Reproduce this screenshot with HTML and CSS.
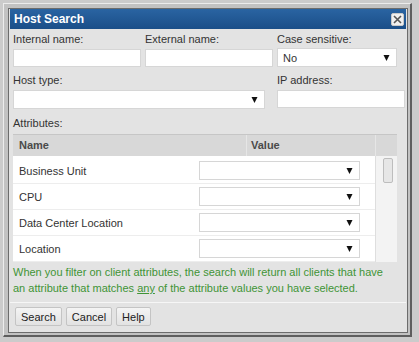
FILE: index.html
```html
<!DOCTYPE html>
<html>
<head>
<meta charset="utf-8">
<link rel="stylesheet" href="styles.css">
</head>
<body>
<div class="window">
  <div class="panel">
    <div class="titlebar">
      <span class="title">Host Search</span>
      <span class="close"><svg width="9" height="9" viewBox="0 0 9 9"><path d="M1 1L8 8M8 1L1 8" stroke="#555" stroke-width="1.6" fill="none"/></svg></span>
    </div>
    <div class="content">
      <div class="form-grid">
        <div class="field">
          <div class="label">Internal name:</div>
          <div class="input"></div>
        </div>
        <div class="field">
          <div class="label">External name:</div>
          <div class="input"></div>
        </div>
        <div class="field">
          <div class="label">Case sensitive:</div>
          <div class="select case"><span class="sel-text">No</span><svg class="arrow" width="7" height="6" viewBox="0 0 7 6"><polygon points="0.5,0 6.5,0 3.5,6" fill="#111"/></svg></div>
        </div>
        <div class="field span2">
          <div class="label">Host type:</div>
          <div class="select host"><span class="sel-text"></span><svg class="arrow" width="7" height="6" viewBox="0 0 7 6"><polygon points="0.5,0 6.5,0 3.5,6" fill="#111"/></svg></div>
        </div>
        <div class="field">
          <div class="label">IP address:</div>
          <div class="input"></div>
        </div>
      </div>
      <div class="attr-label">Attributes:</div>
      <div class="table">
        <div class="thead">
          <div class="th th-name">Name</div>
          <div class="th th-value">Value</div>
          <div class="th th-sb"></div>
        </div>
        <div class="tbody">
          <div class="rows">
            <div class="row"><div class="td-name">Business Unit</div><div class="td-value"><div class="select cell"><span class="sel-text"></span><svg class="arrow" width="7" height="6" viewBox="0 0 7 6"><polygon points="0.5,0 6.5,0 3.5,6" fill="#111"/></svg></div></div></div>
            <div class="row"><div class="td-name">CPU</div><div class="td-value"><div class="select cell"><span class="sel-text"></span><svg class="arrow" width="7" height="6" viewBox="0 0 7 6"><polygon points="0.5,0 6.5,0 3.5,6" fill="#111"/></svg></div></div></div>
            <div class="row"><div class="td-name">Data Center Location</div><div class="td-value"><div class="select cell"><span class="sel-text"></span><svg class="arrow" width="7" height="6" viewBox="0 0 7 6"><polygon points="0.5,0 6.5,0 3.5,6" fill="#111"/></svg></div></div></div>
            <div class="row"><div class="td-name">Location</div><div class="td-value"><div class="select cell"><span class="sel-text"></span><svg class="arrow" width="7" height="6" viewBox="0 0 7 6"><polygon points="0.5,0 6.5,0 3.5,6" fill="#111"/></svg></div></div></div>
          </div>
          <div class="scrollbar"><div class="thumb"></div></div>
        </div>
      </div>
      <p class="note">When you filter on client attributes, the search will return all clients that have an attribute that matches <u>any</u> of the attribute values you have selected.</p>
    </div>
    <div class="footer">
      <button class="btn">Search</button>
      <button class="btn">Cancel</button>
      <button class="btn">Help</button>
    </div>
  </div>
</div>
</body>
</html>
```
FILE: styles.css
```css
* { box-sizing: border-box; }
html, body { margin: 0; padding: 0; }
body {
  background: #cbcbcb;
  font-family: "Liberation Sans", Arial, sans-serif;
  font-size: 11px;
  color: #333;
  padding: 3px 0 0 3px;
  width: 419px;
  height: 342px;
  overflow: hidden;
}
.window {
  width: 409px;
  background: #c2c2c2;
  border-top: 1px solid #ececec;
  border-left: 1px solid #ececec;
  border-right: 2px solid #5e5e5e;
  border-bottom: 2px solid #5e5e5e;
  padding: 4px 2px 2px 4px;
}
.panel {
  width: 400px;
  border: 1px solid #6c6c6c;
  background: #e3e3e3;
  padding: 0 1px;
}
.titlebar {
  height: 20px;
  background: linear-gradient(#2a64a2, #1a4e88);
  display: flex;
  align-items: center;
  justify-content: space-between;
  padding: 0 2px 0 4px;
}
.title {
  color: #fff;
  font-weight: bold;
  font-size: 12px;
}
.close {
  width: 13px;
  height: 13px;
  background: #f0f0f0;
  border: 1px solid #c9c9c9;
  border-radius: 2px;
  display: flex;
  align-items: center;
  justify-content: center;
}
.content {
  padding: 4px 1px 0 3px;
}
.form-grid {
  display: grid;
  grid-template-columns: 128px 128px 128px;
  column-gap: 4px;
  row-gap: 7px;
}
.span2 { grid-column: span 2; }
.label {
  line-height: 13px;
  margin-bottom: 3px;
  color: #333;
}
.input {
  height: 18px;
  background: #fff;
  border: 1px solid #d6d6d6;
}
.select {
  height: 18px;
  background: #fff;
  border: 1px solid #d6d6d6;
  display: flex;
  align-items: center;
  justify-content: space-between;
  padding: 0 6px 0 5px;
}
.select.case { width: 120px; height: 19px; margin-top: -1px; }
.select.host { width: 252px; height: 19px; }
.sel-text { color: #333; }
.arrow { display: block; }
.attr-label {
  line-height: 13px;
  margin-top: 8px;
}
.table {
  width: 384px;
  margin-top: 4px;
}
.thead {
  display: flex;
  height: 22px;
  border-top: 1px solid #c6c6c6;
  background: #d8d8d8;
}
.th {
  font-weight: bold;
  color: #4a4a4a;
  line-height: 21px;
  padding-left: 5px;
}
.th-name { width: 233px; padding-left: 6px; }
.th-value { width: 129px; border-left: 1px solid #e6e6e6; padding-left: 4px; }
.th-sb { width: 22px; border-left: 1px solid #e6e6e6; }
.tbody {
  display: flex;
  height: 106px;
  overflow: hidden;
}
.rows {
  width: 362px;
  background: #fff;
  padding-top: 2px;
}
.row {
  display: flex;
  height: 26px;
  align-items: center;
  border-bottom: 1px solid #ededed;
}
.td-name {
  width: 184px;
  padding-left: 6px;
  color: #333;
}
.td-value {
  padding-left: 2px;
}
.select.cell {
  width: 161px;
  height: 19px;
}
.scrollbar {
  width: 22px;
  background: #f3f3f3;
  border-left: 1px solid #dedede;
  padding: 2px 0 0 7px;
}
.thumb {
  width: 10px;
  height: 25px;
  background: #e6e6e6;
  border: 1px solid #bdbdbd;
  border-radius: 2px;
}
.note {
  width: 378px;
  margin: 2px 0 6px 0;
  line-height: 16px;
  color: #3f9436;
}
.note u { text-decoration: underline; }
.footer {
  border-top: 1px solid #f6f6f6;
  padding: 4px 0 6px 5px;
  display: flex;
  gap: 4px;
}
.btn {
  font-family: "Liberation Sans", Arial, sans-serif;
  font-size: 11px;
  color: #222;
  height: 19px;
  padding: 0 5px;
  background: linear-gradient(#f4f4f4, #e2e2e2);
  border: 1px solid #c4c4c4;
  border-radius: 2px;
  margin: 0;
}
```
